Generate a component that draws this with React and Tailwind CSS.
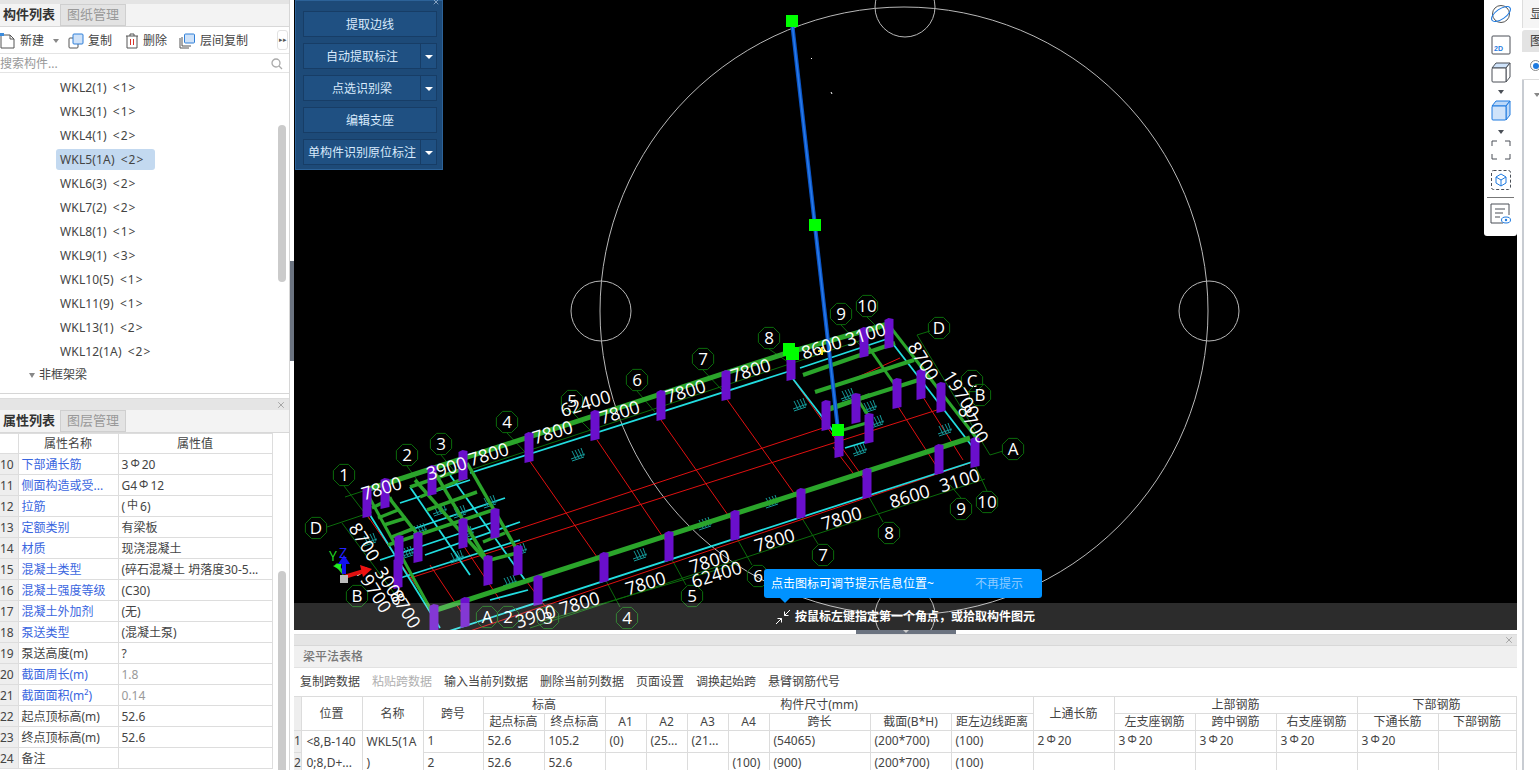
import React from 'react';
import { X } from 'lucide-react';

const Rebar = ({ c = 'Φ' }) => <span className="text-[11px] relative -top-[2px] mx-[2px]">{c}</span>;

const treeItems = [
  ['WKL2(1)', '1'], ['WKL3(1)', '1'], ['WKL4(1)', '2'], ['WKL5(1A)', '2'], ['WKL6(3)', '2'], ['WKL7(2)', '2'],
  ['WKL8(1)', '1'], ['WKL9(1)', '3'], ['WKL10(5)', '1'], ['WKL11(9)', '1'], ['WKL13(1)', '2'], ['WKL12(1A)', '2'],
];

const props = [
  [10, '下部通长筋', <>3<Rebar />20</>, 1],
  [11, '侧面构造或受...', <>G4<Rebar />12</>, 1],
  [12, '拉筋', <>(<Rebar c="中" />6)</>, 1],
  [13, '定额类别', '有梁板', 1],
  [14, '材质', '现浇混凝土', 1],
  [15, '混凝土类型', '(碎石混凝土 坍落度30-5...', 1],
  [16, '混凝土强度等级', '(C30)', 1],
  [17, '混凝土外加剂', '(无)', 1],
  [18, '泵送类型', '(混凝土泵)', 1],
  [19, '泵送高度(m)', '?', 0],
  [20, '截面周长(m)', '1.8', 2],
  [21, '截面面积(m²)', '0.14', 2],
  [22, '起点顶标高(m)', '52.6', 0],
  [23, '终点顶标高(m)', '52.6', 0],
  [24, '备注', '', 0],
];

const NewIcon = () => (
  <svg width="16" height="18" viewBox="0 0 16 18" fill="none">
    <path d="M1 3h9l4 4v9H1z" fill="#fff" stroke="#555" />
    <path d="M10 3v4h4" stroke="#555" />
    <path d="M0 1h4v3H0z" fill="#3b8bdc" />
  </svg>
);

const CopyIcon = () => (
  <svg width="16" height="16" viewBox="0 0 16 16" fill="none">
    <rect x="1" y="5" width="9" height="10" rx="1" fill="#fff" stroke="#555" />
    <rect x="5" y="1" width="10" height="10" rx="1" fill="#cfe2f8" stroke="#2f7fd8" />
  </svg>
);

const TrashIcon = () => (
  <svg width="14" height="16" viewBox="0 0 14 16" fill="none">
    <path d="M1 3h12M5 3V1h4v2M2 3v12h10V3" stroke="#555" />
    <path d="M5.500 6v6M8.500 6v6" stroke="#d8322a" />
  </svg>
);

const LayerIcon = () => (
  <svg width="17" height="16" viewBox="0 0 17 16" fill="none">
    <path d="M1 5v10h9M3 4v9h9" stroke="#555" />
    <rect x="5.500" y="1" width="10" height="9" rx="1" fill="#cfe2f8" stroke="#2f7fd8" />
  </svg>
);

const ToolBtn = ({ icon, label, caret, className = '' }) => (
  <div className={`flex items-center gap-[4px] ${className}`}>
    {icon}
    <span>{label}</span>
    {caret && <span className="ml-[5px] w-0 h-0 border-x-[3px] border-x-transparent border-t-[4px] border-t-[#888]" />}
  </div>
);

const TabBar = ({ active, other }) => (
  <div className="flex h-[23px] bg-[#f3f3f3] border-b border-[#d8d8d8] text-[13px] shrink-0">
    <div className="w-[60px] pl-[3px] flex items-center font-bold text-[#333]">{active}</div>
    <div className="w-[66px] flex items-center justify-center bg-[#e3e3e3] border border-[#cfcfcf] text-[#999]">{other}</div>
  </div>
);

const Tree = () => (
  <div className="flex-1 relative overflow-hidden">
    <div className="pt-[2px]">
      {treeItems.map(([name, n]) => (
        <div key={name} className="h-[24px] flex items-center">
          <div className={`ml-[56px] pl-[4px] pr-[8px] pt-[1px] h-[21px] flex items-center rounded-[3px] text-[#444] tracking-[0.15px] ${name === 'WKL5(1A)' ? 'bg-[#c3d9f0] w-[99px]' : ''}`}>
            {name}
            <span className="ml-[6px] tracking-[1px]">{'<'}{n}{'>'}</span>
          </div>
        </div>
      ))}
      <div className="h-[24px] flex items-center pl-[29px] text-[#444]">
        <span className="w-0 h-0 border-x-[3px] border-x-transparent border-t-[5px] border-t-[#888] mr-[4px]" />
        非框架梁
      </div>
    </div>
    <div className="absolute left-[278px] top-[52px] w-[8px] h-[157px] rounded-[4px] bg-[#cbcbcb]" />
  </div>
);

const PropTable = () => (
  <div className="flex-1 relative overflow-hidden">
    <table className="table-fixed border-collapse w-[272px] text-[12px] leading-none">
      <colgroup>
        <col className="w-[18px]" />
        <col className="w-[100px]" />
        <col className="w-[154px]" />
      </colgroup>
      <thead>
        <tr className="h-[20px]">
          <th className="border border-l-0 border-[#ddd] bg-white" />
          <th className="border border-[#ddd] font-normal text-[#444]">属性名称</th>
          <th className="border border-[#ddd] font-normal text-[#444]">属性值</th>
        </tr>
      </thead>
      <tbody>
        {props.map(([n, name, val, kind]) => (
          <tr key={n} className="h-[21px]">
            <td className="border border-l-0 border-[#ddd] bg-[#eeeeee] pt-[2px] text-[#444] whitespace-nowrap overflow-hidden">{n}</td>
            <td className={`border border-[#ddd] pl-[3px] pt-[2px] whitespace-nowrap overflow-hidden ${kind ? 'text-[#3a66e0]' : 'text-[#444]'}`}>{name}</td>
            <td className={`border border-[#ddd] pl-[3px] pt-[2px] whitespace-nowrap overflow-hidden ${kind === 2 ? 'text-[#999]' : 'text-[#444]'}`}>{val}</td>
          </tr>
        ))}
      </tbody>
    </table>
    <div className="absolute left-[278px] top-[138px] w-[8px] h-[230px] rounded-[4px] bg-[#cbcbcb]" />
  </div>
);

const LeftPanel = () => (
  <div className="w-[290px] shrink-0 h-full flex flex-col border-r border-[#d6d6d6] text-[12px] bg-white">
    <div className="h-[394px] flex flex-col border-b border-[#d6d6d6]">
      <div className="h-[4px] bg-[#e4e4e4] shrink-0" />
      <TabBar active="构件列表" other="图纸管理" />
      <div className="h-[27px] shrink-0 flex items-center pt-[2px] border-b border-[#e4e4e4] text-[#444] relative">
        <div className="flex items-center">
          <ToolBtn icon={<NewIcon />} label="新建" caret />
          <ToolBtn className="ml-[9px]" icon={<CopyIcon />} label="复制" />
          <ToolBtn className="ml-[13px]" icon={<TrashIcon />} label="删除" />
          <ToolBtn className="ml-[12px]" icon={<LayerIcon />} label="层间复制" />
        </div>
        <div className="absolute left-[277px] top-[3px] w-[11px] h-[20px] border border-[#e2e2e2] rounded-[3px] flex items-center justify-center text-[7px] text-[#555]">▸▸</div>
      </div>
      <div className="h-[19px] shrink-0 flex items-center justify-between pt-[1px] border-b border-[#e4e4e4] text-[#999] pr-[6px]">
        <span>搜索构件...</span>
        <svg width="12" height="12" viewBox="0 0 12 12" fill="none" stroke="#aaa" strokeWidth="1.3">
          <circle cx="5" cy="5" r="4" />
          <path d="M8 8l3 3" />
        </svg>
      </div>
      <Tree />
    </div>
    <div className="h-[4px] shrink-0 bg-white" />
    <div className="h-[12px] shrink-0 bg-[#e5e5e5] flex items-center justify-end pr-[3px] border-t border-[#ddd]">
      <X size={10} color="#999" />
    </div>
    <TabBar active="属性列表" other="图层管理" />
    <PropTable />
  </div>
);

const bubbles = [
  ['1', 344, 475], ['2', 407, 455], ['3', 441, 444], ['4', 507, 422], ['5', 572, 401], ['6', 637, 380], ['7', 703, 359],
  ['8', 769, 338], ['9', 841, 314], ['10', 867, 306], ['D', 939, 328], ['C', 972, 381], ['B', 980, 395], ['A', 1013, 449],
  ['10', 987, 502], ['9', 961, 509], ['8', 889, 533], ['7', 823, 555], ['6', 758, 576], ['5', 692, 596], ['4', 627, 618],
  ['D', 316, 528], ['B', 357, 596], ['A', 487, 617], ['2', 508, 617], ['3', 548, 618],
];

const dims = [
  ['7800', 489, 456, -17], ['7800', 553, 434, -17], ['7800', 620, 414, -17], ['62400', 586, 405, -17], ['7800', 686, 393, -17],
  ['7800', 751, 372, -17], ['8600', 822, 349, -17], ['3100', 866, 336, -17], ['7800', 382, 490, -17], ['3900', 447, 470, -17],
  ['7800', 580, 605, -17], ['7800', 646, 585, -17], ['7800', 710, 563, -17], ['62400', 717, 576, -17], ['7800', 775, 542, -17],
  ['7800', 842, 520, -17], ['8600', 910, 498, -17], ['3100', 960, 482, -17], ['3900', 536, 618, -17],
  ['8700', 922, 362, 58], ['19700', 960, 395, 58], ['8700', 972, 425, 58],
  ['8700', 363, 543, 58], ['19700', 372, 590, 58], ['3008', 389, 587, 58], ['8700', 404, 610, 58],
];

const columns = [
  [463, 465], [529, 447], [595, 425], [661, 405], [726, 385], [791, 365],
  [465, 612], [434, 619], [538, 590], [604, 567], [669, 546], [735, 525], [801, 503], [867, 483], [939, 459], [975, 452],
  [367, 502], [385, 493], [432, 480], [399, 550], [418, 547], [463, 533], [495, 523], [488, 570], [518, 560], [398, 573],
  [864, 342], [889, 333], [897, 393], [921, 384], [941, 397], [826, 415], [856, 408], [869, 428], [839, 442],
];

const greenBeams = [
  [366, 490, 790, 352, 5], [790, 352, 888, 324, 5], [430, 612, 970, 438, 5], [888, 324, 978, 440, 3], [368, 495, 432, 612, 3],
  [383, 490, 418, 535, 3.500], [415, 480, 490, 565, 3.500], [435, 473, 485, 557, 3.500], [467, 463, 517, 550, 3.500],
  [372, 508, 392, 498, 3.500], [378, 518, 398, 510, 3.500], [384, 525, 406, 518, 3.500], [392, 537, 415, 528, 3.500],
  [388, 545, 493, 510, 3.500], [410, 487, 460, 470, 3.500], [420, 497, 467, 477, 3.500], [427, 510, 477, 492, 3.500],
  [483, 542, 505, 533, 3.500], [490, 560, 517, 553, 3.500],
  [803, 375, 895, 343, 4], [815, 392, 914, 360, 4], [830, 408, 925, 378, 4], [828, 410, 870, 395, 4], [843, 430, 870, 422, 3],
  [860, 335, 895, 385, 3], [858, 400, 870, 418, 3],
];

const cyanLines = [
  [470, 473, 790, 371], [800, 368, 890, 338], [380, 560, 500, 520], [400, 503, 470, 480], [410, 530, 505, 498],
  [425, 555, 520, 522], [400, 578, 520, 540], [490, 600, 528, 590], [440, 634, 975, 461],
  [370, 515, 440, 628], [410, 487, 470, 575], [450, 475, 525, 580], [790, 375, 840, 440], [845, 448, 868, 441],
  [890, 340, 975, 450],
];

const redLines = [
  [500, 535, 823, 428], [410, 578, 937, 410], [440, 641, 970, 463], [529, 460, 604, 567], [597, 440, 669, 546], [661, 420, 735, 525],
  [726, 398, 801, 503], [792, 378, 867, 483], [897, 405, 937, 467], [923, 397, 963, 460], [833, 447, 853, 473],
  [367, 515, 433, 610], [463, 545, 500, 600], [430, 565, 470, 625], [518, 570, 548, 610], [840, 385, 900, 358],
];

const darkLines = [
  [530, 628, 985, 479], [540, 622, 740, 563], [345, 497, 470, 456], [470, 470, 868, 338], [917, 335, 990, 455], [342, 523, 397, 597],
  [344, 486, 370, 520], [407, 466, 420, 484], [441, 455, 455, 472], [507, 433, 525, 452], [572, 412, 592, 432], [637, 391, 655, 412], [703, 370, 722, 390],
  [769, 349, 788, 362], [841, 325, 860, 345], [867, 317, 880, 330], [990, 455, 1003, 451], [917, 335, 930, 331], [327, 527, 372, 512],
  [950, 485, 961, 498], [975, 465, 987, 491], [865, 490, 883, 522], [800, 515, 818, 544], [735, 535, 752, 565], [670, 556, 686, 585], [604, 577, 620, 607],
];

const hatches = [
  [800, 405], [848, 395], [870, 407], [877, 422], [945, 430], [860, 450], [578, 455], [370, 540], [407, 553], [457, 557], [467, 533],
  [460, 512], [490, 502], [520, 550], [510, 582], [640, 555], [705, 524], [772, 502], [420, 530], [440, 510],
];

const bubblePoints = (cx, cy, r = 11.5) =>
  Array.from({ length: 8 }, (_, i) => {
    const a = (Math.PI / 4) * i + Math.PI / 8;
    return `${cx + r * Math.cos(a)},${cy + r * Math.sin(a)}`;
  }).join(' ');

const Model = () => (
  <svg className="block absolute inset-0 w-full h-full" viewBox="294 0 1223 630" fontFamily="'Open Sans', sans-serif">
    <g fill="none" stroke="#b8b8b8" strokeWidth="1">
      <circle cx="904" cy="311" r="304" />
      <circle cx="601" cy="311" r="30" />
      <circle cx="1209" cy="311" r="30" />
      <circle cx="905" cy="7" r="30" />
      <circle cx="905" cy="615" r="30" />
    </g>
    <path d="M811 58l1 1M831 92l1 2" stroke="#fff" />
    {darkLines.map((l, i) => (
      <line key={i} x1={l[0]} y1={l[1]} x2={l[2]} y2={l[3]} stroke="#0b6b0b" />
    ))}
    {redLines.map((l, i) => (
      <line key={i} x1={l[0]} y1={l[1]} x2={l[2]} y2={l[3]} stroke="#e01010" />
    ))}
    {cyanLines.map((l, i) => (
      <line key={i} x1={l[0]} y1={l[1]} x2={l[2]} y2={l[3]} stroke="#22dde0" strokeWidth="1.800" />
    ))}
    {hatches.map(([x, y], i) => (
      <g key={i} stroke="#159a9a" strokeWidth="1">
        <path d={`M${x - 6} ${y - 4}l4 8M${x - 3} ${y - 5}l4 8M${x} ${y - 6}l4 8M${x + 3} ${y - 7}l3 8M${x - 7} ${y + 4}l14-5M${x - 6} ${y + 6}l12-4`} />
      </g>
    ))}
    {greenBeams.map((l, i) => (
      <line key={i} x1={l[0]} y1={l[1]} x2={l[2]} y2={l[3]} stroke="#2ba52b" strokeWidth={l[4]} />
    ))}
    {columns.map(([x, y], i) => (
      <path key={i} d={`M${x - 4.500} ${y - 13}l4-2 5 1v28l-9 2z`} fill="#6a0fcc" />
    ))}
    <path d="M818 351h8M822 347v8" stroke="#f4e020" strokeWidth="2" />
    <line x1="792" y1="22" x2="838" y2="430" stroke="#0a56c8" strokeWidth="4" />
    <line x1="792" y1="22" x2="838" y2="430" stroke="#2a7ae8" strokeWidth="1.500" />
    <path d="M786 15h12v12h-12zM809 219h12v12h-12zM832 424h12v12h-12zM783 343h12v4h4v13h-13v-4h-3z" fill="#00ff00" />
    {bubbles.map(([t, x, y], i) => (
      <g key={i}>
        <polygon points={bubblePoints(x, y)} fill="none" stroke="#0b6b0b" />
        <text x={x} y={y + 6} fontSize="17" fill="#fff" textAnchor="middle">{t}</text>
      </g>
    ))}
    {dims.map(([t, x, y, r], i) => (
      <text key={i} x={x} y={y} fontSize="18" fill="#fff" textAnchor="middle" dominantBaseline="middle" transform={`rotate(${r} ${x} ${y})`}>{t}</text>
    ))}
    <g>
      <path d="M344 574l-8-10" stroke="#22cc22" strokeWidth="3" />
      <path d="M333 566l9-4-2 8z" fill="#22ee22" />
      <path d="M344 574v-15" stroke="#1111ee" strokeWidth="4" />
      <path d="M338 564l6-9 6 9z" fill="#1111ee" />
      <path d="M344 577l20-6" stroke="#e01010" strokeWidth="4" />
      <path d="M360 565l12 4-9 8z" fill="#ee1111" />
      <rect x="340" y="575" width="8" height="8" fill="#bbb" />
      <text x="329" y="561" fontSize="14" fill="#22dd22">Y</text>
      <text x="339" y="558" fontSize="14" fill="#2222ff">Z</text>
    </g>
  </svg>
);

const panelBtnClass = 'h-[26px] pt-[1px] bg-[#1f5082] border border-[#173d66] flex items-center justify-center text-[12px] text-[#d8eafc] whitespace-nowrap';

const PanelBtn = ({ label, drop }) =>
  drop ? (
    <div className="flex">
      <div className={`${panelBtnClass} flex-1`}>{label}</div>
      <div className={`${panelBtnClass} w-[17px] -ml-px`}>
        <span className="w-0 h-0 border-x-[4px] border-x-transparent border-t-[4px] border-t-white" />
      </div>
    </div>
  ) : (
    <div className={panelBtnClass}>{label}</div>
  );

const FloatPanel = () => (
  <div className="absolute left-[1px] top-0 w-[148px] h-[170px] bg-[#1d4a78] border border-[#2c6298] flex flex-col">
    <div className="h-[3px] relative shrink-0">
      <X size={8} color="#b9cde2" className="absolute right-[2px] -top-[3px]" />
    </div>
    <div className="flex flex-col gap-[6px] pl-[7px] pr-[5px] pt-[7px]">
      <PanelBtn label="提取边线" />
      <PanelBtn label="自动提取标注" drop />
      <PanelBtn label="点选识别梁" drop />
      <PanelBtn label="编辑支座" />
      <PanelBtn label="单构件识别原位标注" drop />
    </div>
  </div>
);

const Cube = ({ blue }) => (
  <svg width="20" height="21" viewBox="0 0 20 21" fill="none">
    <path d="M1 6l4-5h14l-4 5z" fill={blue ? '#bcd8f8' : '#cfe3fa'} stroke={blue ? '#1e7ae0' : '#4a4f57'} />
    <path d="M15 6l4-5v14l-4 5z" fill={blue ? '#bcd8f8' : '#fff'} stroke={blue ? '#1e7ae0' : '#4a4f57'} />
    <rect x="1" y="6" width="14" height="14" rx="1" fill={blue ? '#cfe3fa' : '#fff'} stroke={blue ? '#1e7ae0' : '#4a4f57'} />
  </svg>
);

const Caret = () => <span className="w-0 h-0 border-x-[3.5px] border-x-transparent border-t-[4px] border-t-[#4a4f57]" />;

const RightTools = () => (
  <div className="absolute right-0 top-0 w-[33px] h-[236px] bg-white rounded-b-[3px] flex flex-col items-center pt-[4px]">
    <svg width="22" height="20" viewBox="0 0 22 20" fill="none">
      <circle cx="11" cy="10" r="8.500" stroke="#555" />
      <ellipse cx="11" cy="10" rx="11" ry="5" transform="rotate(-35 11 10)" stroke="#1e7ae0" />
    </svg>
    <svg className="mt-[11px]" width="20" height="20" viewBox="0 0 20 20" fill="none">
      <rect x="1" y="1" width="18" height="18" rx="1" stroke="#4a4f57" />
      <text x="3" y="16" fontSize="7" fontWeight="700" fill="#1e7ae0" fontFamily="'Liberation Sans', sans-serif">2D</text>
    </svg>
    <div className="mt-[7px] flex"><Cube /></div>
    <div className="mt-[7px] flex"><Caret /></div>
    <div className="mt-[6px] flex"><Cube blue /></div>
    <div className="mt-[9px] flex"><Caret /></div>
    <svg className="mt-[6px]" width="20" height="20" viewBox="0 0 20 20" fill="none" stroke="#4a4f57">
      <path d="M1 6V1h5M14 1h5v5M19 14v5h-5M6 19H1v-5" />
    </svg>
    <svg className="mt-[10px]" width="20" height="20" viewBox="0 0 20 20" fill="none">
      <rect x="0.500" y="0.500" width="19" height="19" rx="2" stroke="#4a4f57" strokeDasharray="3 2" />
      <path d="M10 4l5 3v6l-5 3-5-3V7zM5 7l5 3 5-3M10 10v6" stroke="#1e7ae0" />
    </svg>
    <div className="mt-[7px] w-[27px] border-t border-[#777]" />
    <svg className="mt-[5px]" width="21" height="21" viewBox="0 0 21 21" fill="none">
      <path d="M13 20H1V1h18v11" stroke="#4a4f57" />
      <path d="M5 6h10M5 10h8M5 14h5" stroke="#4a4f57" />
      <ellipse cx="16" cy="17" rx="4.500" ry="3" stroke="#1e7ae0" />
      <circle cx="16" cy="17" r="1.200" fill="#1e7ae0" />
    </svg>
  </div>
);

const Canvas = () => (
  <div className="h-[630px] shrink-0 relative bg-black overflow-hidden">
    <Model />
    <FloatPanel />
    <RightTools />
    <div className="absolute left-0 right-0 top-[603px] h-[27px] bg-[#ffffff2c] flex items-center pl-[481px] text-white text-[12px] font-semibold">
      <svg className="mr-[4px]" width="16" height="16" viewBox="0 0 16 16" fill="none" stroke="#fff">
        <path d="M15 1L9.500 6.500M9.500 2.500v4h4M1 15l5.500-5.500M2.500 9.500h4v4" />
      </svg>
      按鼠标左键指定第一个角点，或拾取构件图元
    </div>
    <div className="absolute left-[470px] top-[569px] w-[278px] h-[29px] bg-[#0092ff] rounded-[3px] flex items-center justify-between pl-[7px] pr-[19px] text-[12px] text-white">
      <span>点击图标可调节提示信息位置~</span>
      <span className="text-[#8fcbff]">不再提示</span>
      <span className="absolute left-[16px] -bottom-[5px] w-0 h-0 border-x-[5px] border-x-transparent border-t-[5px] border-t-[#0092ff]" />
    </div>
  </div>
);

const toolActions = ['复制跨数据', '粘贴跨数据', '输入当前列数据', '删除当前列数据', '页面设置', '调换起始跨', '悬臂钢筋代号'];
const colWidths = ['w-[7px]', 'w-[61px]', 'w-[61px]', 'w-[60px]', 'w-[61px]', 'w-[61px]', 'w-[41px]', 'w-[41px]', 'w-[41px]', 'w-[41px]', 'w-[101px]', 'w-[81px]', 'w-[82px]', 'w-[81px]', 'w-[81px]', 'w-[81px]', 'w-[81px]', 'w-[81px]', 'w-[78px]'];
const cell = 'border border-[#dcdcdc] font-normal px-[4px] whitespace-nowrap overflow-hidden';
const steel = (n) => <>{n}<Rebar />20</>;

const BeamTable = () => (
  <table className="table-fixed border-collapse w-[1222px] text-[12px] leading-none text-[#444]">
    <colgroup>
      {colWidths.map((w, i) => <col key={i} className={w} />)}
    </colgroup>
    <thead>
      <tr className="h-[17px]">
        <th rowSpan={2} className="border border-l-0 border-[#dcdcdc] bg-[#eee]" />
        <th rowSpan={2} className={cell}>位置</th>
        <th rowSpan={2} className={cell}>名称</th>
        <th rowSpan={2} className={cell}>跨号</th>
        <th colSpan={2} className={cell}>标高</th>
        <th colSpan={7} className={cell}>构件尺寸(mm)</th>
        <th rowSpan={2} className={cell}>上通长筋</th>
        <th colSpan={3} className={cell}>上部钢筋</th>
        <th colSpan={2} className={cell}>下部钢筋</th>
      </tr>
      <tr className="h-[17px]">
        {['起点标高', '终点标高', 'A1', 'A2', 'A3', 'A4', '跨长', '截面(B*H)', '距左边线距离', '左支座钢筋', '跨中钢筋', '右支座钢筋', '下通长筋', '下部钢筋'].map((t) => (
          <th key={t} className={`${cell} !px-0`}>{t}</th>
        ))}
      </tr>
    </thead>
    <tbody>
      <tr className="h-[21px]">
        <td className="border border-l-0 border-[#dcdcdc] bg-[#eee] overflow-hidden">1</td>
        <td rowSpan={2} className="border border-[#dcdcdc] pl-[5px] leading-[21px] align-top whitespace-nowrap overflow-hidden">{'<8,B-140'}<br />{'0;8,D+...'}</td>
        <td rowSpan={2} className="border border-[#dcdcdc] pl-[4px] leading-[21px] align-top whitespace-nowrap overflow-hidden">WKL5(1A<br />)</td>
        <td className={cell}>1</td>
        <td className={cell}>52.6</td>
        <td className={cell}>105.2</td>
        <td className={cell}>(0)</td>
        <td className={cell}>(25...</td>
        <td className={cell}>(21...</td>
        <td className={cell} />
        <td className={cell}>(54065)</td>
        <td className={cell}>(200*700)</td>
        <td className={cell}>(100)</td>
        <td className={cell}>{steel(2)}</td>
        <td className={cell}>{steel(3)}</td>
        <td className={cell}>{steel(3)}</td>
        <td className={cell}>{steel(3)}</td>
        <td className={cell}>{steel(3)}</td>
        <td className={cell} />
      </tr>
      <tr className="h-[21px]">
        <td className="border border-l-0 border-[#dcdcdc] bg-[#eee] overflow-hidden">2</td>
        <td className={cell}>2</td>
        <td className={cell}>52.6</td>
        <td className={cell}>52.6</td>
        <td className={cell} />
        <td className={cell} />
        <td className={cell} />
        <td className={cell}>(100)</td>
        <td className={cell}>(900)</td>
        <td className={cell}>(200*700)</td>
        <td className={cell}>(100)</td>
        <td className={cell} />
        <td className={cell} />
        <td className={cell} />
        <td className={cell} />
        <td className={cell} />
        <td className={cell} />
      </tr>
    </tbody>
  </table>
);

const BottomPanel = () => (
  <div className="flex-1 flex flex-col overflow-hidden border-t border-[#ddd] text-[12px]">
    <div className="h-[11px] shrink-0 bg-[#e5e5e5] border-b border-[#d8d8d8] flex items-center justify-end pr-[3px]">
      <X size={10} color="#999" />
    </div>
    <div className="h-[22px] shrink-0 bg-[#f0f0f0] border-b border-[#e2e2e2] flex items-center pl-[9px] font-medium text-[#777]">梁平法表格</div>
    <div className="h-[28px] shrink-0 flex items-center gap-[12px] pl-[6px] text-[#444]">
      {toolActions.map((t) => (
        <span key={t} className={t === '粘贴跨数据' ? 'text-[#b0b0b0]' : ''}>{t}</span>
      ))}
    </div>
    <BeamTable />
  </div>
);

export default function App() {
  return (
    <div className="w-[1539px] h-[770px] overflow-hidden flex bg-white font-['Noto_Sans','Noto_Sans_CJK_SC',sans-serif]">
      <LeftPanel />
      <div className="w-[4px] shrink-0 bg-white">
        <div className="mt-[261px] h-[100px] bg-[#6b7380]" />
      </div>
      <div className="w-[1223px] shrink-0 flex flex-col h-full">
        <Canvas />
        <div className="h-[4px] shrink-0 flex justify-center bg-white">
          <div className="w-[100px] ml-[1px] bg-[#6b7380] flex justify-center">
            <span className="w-0 h-0 border-x-[3px] border-x-transparent border-t-[3px] border-t-[#ccc]" />
          </div>
        </div>
        <BottomPanel />
      </div>
      <div className="w-[22px] shrink-0 bg-white flex flex-col pl-[5px] text-[13px] text-[#444] overflow-hidden">
        <div className="h-[28px] shrink-0 bg-[#f5f5f5] border-l border-[#ddd] flex items-center pl-[7px] whitespace-nowrap">显</div>
        <div className="h-[22px] shrink-0 bg-[#e3e3e3] flex items-center pl-[8px] mt-[2px] rounded-tl-[3px]">图</div>
        <div className="h-[28px] shrink-0 flex items-center pl-[8px] border-b border-[#ddd]">
          <span className="w-[11px] h-[11px] shrink-0 rounded-full border border-[#888] flex items-center justify-center">
            <span className="w-[6px] h-[6px] rounded-full bg-[#1e7ae0]" />
          </span>
        </div>
        <div className="flex-1 border-l-2 border-[#c8ccd2] pl-[10px] pt-[13px]">
          <span className="block w-0 h-0 border-x-[3px] border-x-transparent border-t-[4px] border-t-[#888]" />
        </div>
      </div>
    </div>
  );
}
